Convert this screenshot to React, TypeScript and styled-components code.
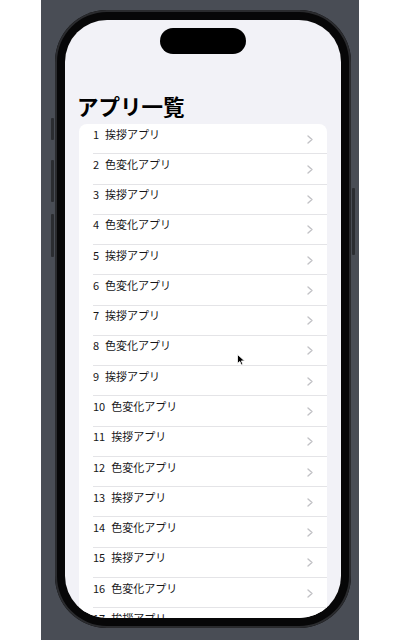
import React from "react";
import styled, { createGlobalStyle } from "styled-components";

const Global = createGlobalStyle`
  html, body { margin: 0; padding: 0; background: #ffffff; }
  body { font-family: "Noto Sans CJK JP", "Noto Sans", sans-serif; }
  * { box-sizing: border-box; }
`;

const Page = styled.div`
  width: 400px;
  height: 640px;
  display: flex;
  justify-content: center;
  background: #ffffff;
  overflow: hidden;
`;

const Backdrop = styled.div`
  width: 318px;
  height: 640px;
  background: #494d55;
  display: flex;
  align-items: flex-start;
  padding-left: 10px;
  gap: 1px;
`;

const ButtonColumn = styled.div<{ $top: number }>`
  width: 3px;
  display: flex;
  flex-direction: column;
  padding-top: ${(p) => p.$top}px;
`;

const SideButton = styled.div<{ $h: number; $gap?: number }>`
  width: 3px;
  height: ${(p) => p.$h}px;
  margin-bottom: ${(p) => p.$gap ?? 0}px;
  background: #2b2d31;
  border-radius: 1px;
`;

const Phone = styled.div`
  margin-top: 10px;
  width: 296px;
  height: 618px;
  border-radius: 52px;
  padding: 10px;
  background: #070708;
  box-shadow: inset 0 0 0 2px #2a2b2e;
  display: flex;
`;

const Screen = styled.div`
  position: relative;
  width: 276px;
  height: 598px;
  border-radius: 42px;
  overflow: hidden;
  background: #f2f2f7;
  display: flex;
  flex-direction: column;
  padding: 73px 14px 0 12px;
`;

const Island = styled.div`
  position: absolute;
  top: 8px;
  left: 95px;
  width: 86px;
  height: 26px;
  border-radius: 13px;
  background: #000;
`;

const Title = styled.h1`
  margin: 0 0 5px 0;
  font-size: 21.5px;
  line-height: 26px;
  font-weight: 700;
  color: #000;
  letter-spacing: 0;
`;

const Card = styled.div`
  margin-left: 2px;
  background: #ffffff;
  border-radius: 8px 8px 0 0;
  display: flex;
  flex-direction: column;
`;

const Row = styled.div`
  height: 30.27px;
  padding-left: 14px;
  display: flex;
  flex-shrink: 0;
`;

const RowInner = styled.div<{ $last?: boolean }>`
  flex: 1;
  display: flex;
  align-items: center;
  padding-right: 14px;
  border-bottom: ${(p) => (p.$last ? "none" : "1px solid #e4e4e7")};
`;

const Label = styled.div`
  flex: 1;
  display: flex;
  gap: 6px;
  font-size: 11px;
  line-height: 14px;
  color: #161618;
  margin-top: -10px;
`;

const Chevron = styled.svg`
  width: 6px;
  height: 9px;
  flex-shrink: 0;
  margin-top: 1px;
`;

const Cursor = styled.svg`
  position: absolute;
  left: 172px;
  top: 334px;
  width: 9px;
  height: 12px;
`;

const items = Array.from({ length: 17 }, (_, i) => ({
  n: i + 1,
  name: i % 2 === 0 ? "挨拶アプリ" : "色変化アプリ",
}));

export default function App() {
  return (
    <>
      <Global />
      <Page>
        <Backdrop>
          <ButtonColumn $top={118}>
            <SideButton $h={22} $gap={20} />
            <SideButton $h={42} $gap={12} />
            <SideButton $h={43} />
          </ButtonColumn>
          <Phone>
            <Screen>
              <Island />
              <Title>アプリ一覧</Title>
              <Card>
                {items.map((it, idx) => (
                  <Row key={it.n}>
                    <RowInner $last={idx === items.length - 1}>
                      <Label>
                        <span>{it.n}</span>
                        <span>{it.name}</span>
                      </Label>
                      <Chevron viewBox="0 0 6 9">
                        <polyline
                          points="1,1 5,4.5 1,8"
                          fill="none"
                          stroke="#c2c2c6"
                          strokeWidth="1.4"
                          strokeLinecap="round"
                          strokeLinejoin="round"
                        />
                      </Chevron>
                    </RowInner>
                  </Row>
                ))}
              </Card>
              <Cursor viewBox="0 0 9 12">
                <path
                  d="M0.5 0.5 L0.5 9.5 L2.8 7.4 L4.4 11 L5.9 10.3 L4.4 6.9 L7.6 6.9 Z"
                  fill="#000"
                  stroke="#fff"
                  strokeWidth="0.8"
                />
              </Cursor>
            </Screen>
          </Phone>
          <ButtonColumn $top={188}>
            <SideButton $h={67} />
          </ButtonColumn>
        </Backdrop>
      </Page>
    </>
  );
}
